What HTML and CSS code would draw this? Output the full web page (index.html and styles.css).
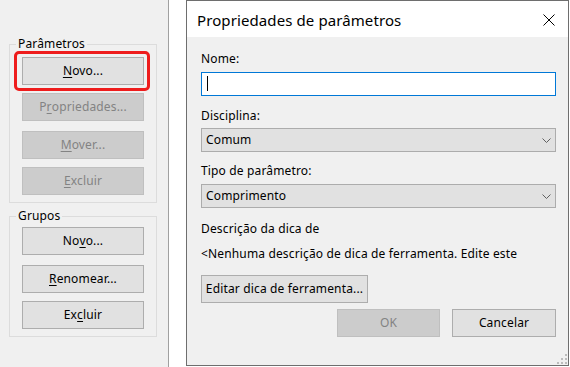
FILE: index.html
```html
<!DOCTYPE html>
<html lang="pt">
<head>
<meta charset="utf-8">
<title>Propriedades de parâmetros</title>
<link rel="stylesheet" href="styles.css">
</head>
<body>
<div class="screen">
  <aside class="panel">
    <fieldset class="group group-params">
      <legend>Parâmetros</legend>
      <div class="stack">
        <div class="highlight"><button class="btn"><u>N</u>ovo...</button></div>
        <button class="btn" disabled>P<u>r</u>opriedades...</button>
        <button class="btn wide-gap" disabled><u>M</u>over...</button>
        <button class="btn" disabled><u>E</u>xcluir</button>
      </div>
    </fieldset>
    <fieldset class="group group-groups">
      <legend>Grupos</legend>
      <div class="stack">
        <button class="btn">No<u>v</u>o...</button>
        <button class="btn wide-gap"><u>R</u>enomear...</button>
        <button class="btn">Ex<u>c</u>luir</button>
      </div>
    </fieldset>
  </aside>
  <div class="gap-strip"></div>
  <section class="dialog">
    <header class="titlebar">
      <span class="title">Propriedades de parâmetros</span>
      <svg class="close" width="12" height="12" viewBox="0 0 12 12"><path d="M0.5 0.5 L11.5 11.5 M11.5 0.5 L0.5 11.5" stroke="#000" stroke-width="1" fill="none"/></svg>
    </header>
    <div class="body">
      <label class="lbl lbl-nome">Nome:</label>
      <div class="input"><span class="caret"></span></div>
      <label class="lbl lbl-disc">Disciplina:</label>
      <div class="select"><span>Comum</span><svg class="chev" width="9" height="5" viewBox="0 0 9 5"><path d="M0.5 0.5 L4.5 4.5 L8.5 0.5" stroke="#606060" stroke-width="1" fill="none"/></svg></div>
      <label class="lbl lbl-tipo">Tipo de parâmetro:</label>
      <div class="select select-tipo"><span>Comprimento</span><svg class="chev" width="9" height="5" viewBox="0 0 9 5"><path d="M0.5 0.5 L4.5 4.5 L8.5 0.5" stroke="#606060" stroke-width="1" fill="none"/></svg></div>
      <div class="lbl lbl-desc">Descrição da dica de</div>
      <div class="lbl lbl-none">&lt;Nenhuma descrição de dica de ferramenta. Edite este</div>
      <button class="btn btn-edit">Editar dica de ferramenta...</button>
      <div class="actions">
        <button class="btn btn-ok" disabled>OK</button>
        <button class="btn btn-cancel">Cancelar</button>
      </div>
    </div>
    <svg class="grip" width="10" height="10" viewBox="0 0 10 10">
      <rect x="8" y="0" width="2" height="2" fill="#bcbcbc"/>
      <rect x="4" y="4" width="2" height="2" fill="#bcbcbc"/>
      <rect x="8" y="4" width="2" height="2" fill="#bcbcbc"/>
      <rect x="0" y="8" width="2" height="2" fill="#bcbcbc"/>
      <rect x="4" y="8" width="2" height="2" fill="#bcbcbc"/>
      <rect x="8" y="8" width="2" height="2" fill="#bcbcbc"/>
    </svg>
  </section>
</div>
</body>
</html>
```
FILE: styles.css
```css
* { box-sizing: border-box; }
html, body {
  margin: 0;
  padding: 0;
  background: #ffffff;
  font-family: "Noto Sans", "Open Sans", sans-serif;
  font-size: 12px;
  line-height: 16px;
  letter-spacing: 0.15px;
  color: #000;
}
.screen {
  display: flex;
  width: 570px;
  height: 367px;
  overflow: hidden;
}
.panel {
  width: 169px;
  flex: none;
  height: 367px;
  background: #f0f0f0;
  border-right: 1px solid #a0a0a0;
  padding: 36px 0 0 9px;
}
.group {
  width: 148px;
  margin: 0;
  padding: 0;
  border: 1px solid #dcdcdc;
  min-width: 0;
}
.group legend {
  margin-left: 6px;
  padding: 0 2px;
  font-size: 12px;
  line-height: 16px;
}
.group-groups { margin-top: 5px; }
.stack {
  display: flex;
  flex-direction: column;
  gap: 8px;
  padding: 5px 12px 7px;
}
.group-groups .stack { padding-top: 3px; }
.stack .wide-gap { margin-top: 2px; }
.btn {
  display: flex;
  align-items: center;
  justify-content: center;
  height: 28px;
  width: 122px;
  padding: 0;
  margin: 0;
  font-family: inherit;
  font-size: 12px;
  line-height: 16px;
  letter-spacing: 0.15px;
  color: #000;
  background: #e1e1e1;
  border: 1px solid #adadad;
  border-radius: 0;
}
.btn u { text-underline-offset: 2px; }
.btn:disabled {
  background: #cccccc;
  border-color: #bfbfbf;
  color: #838383;
}
.highlight { position: relative; }
.highlight::after {
  content: "";
  position: absolute;
  top: -6px;
  left: -8px;
  right: -6px;
  bottom: -6px;
  border: 3px solid #ee1c1c;
  border-radius: 5px;
  pointer-events: none;
}
.gap-strip {
  width: 17px;
  flex: none;
  background: #ffffff;
}
.dialog {
  position: relative;
  width: 383px;
  height: 366px;
  flex: none;
  border: 1px solid #6e6e6e;
  background: #f0f0f0;
  display: flex;
  flex-direction: column;
}
.titlebar {
  height: 36px;
  flex: none;
  background: #ffffff;
  display: flex;
  align-items: center;
  justify-content: space-between;
  padding: 0 13px 0 10px;
}
.title {
  font-size: 15px;
  line-height: 20px;
  letter-spacing: 0.1px;
  padding-top: 1px;
}
.close { display: block; margin-top: 1px; }
.body {
  display: flex;
  flex-direction: column;
  align-items: flex-start;
  padding: 12px 12px 0 14px;
}
.lbl { display: block; line-height: 16px; padding-top: 2px; white-space: nowrap; }
.input {
  margin-top: 5px;
  width: 355px;
  height: 24px;
  background: #ffffff;
  border: 1px solid #0078d7;
  padding: 3px 0 0 5px;
}
.caret {
  display: block;
  width: 1px;
  height: 15px;
  background: #000;
}
.lbl-disc { margin-top: 10px; }
.select {
  margin-top: 4px;
  width: 355px;
  height: 24px;
  background: #e1e1e1;
  border: 1px solid #acacac;
  display: flex;
  align-items: center;
  justify-content: space-between;
  padding: 0 4px 0 4px;
}
.chev { display: block; }
.lbl-tipo { margin-top: 9px; }
.select-tipo { margin-top: 5px; }
.lbl-desc { margin-top: 11px; }
.lbl-none { margin-top: 7px; }
.btn-edit {
  margin-top: 13px;
  width: 167px;
}
.actions {
  align-self: stretch;
  margin-top: 6px;
  display: flex;
  justify-content: flex-end;
  gap: 12px;
}
.btn-ok { width: 103px; }
.btn-cancel { width: 104px; }
.grip {
  position: absolute;
  right: 1px;
  bottom: 1px;
}
```
